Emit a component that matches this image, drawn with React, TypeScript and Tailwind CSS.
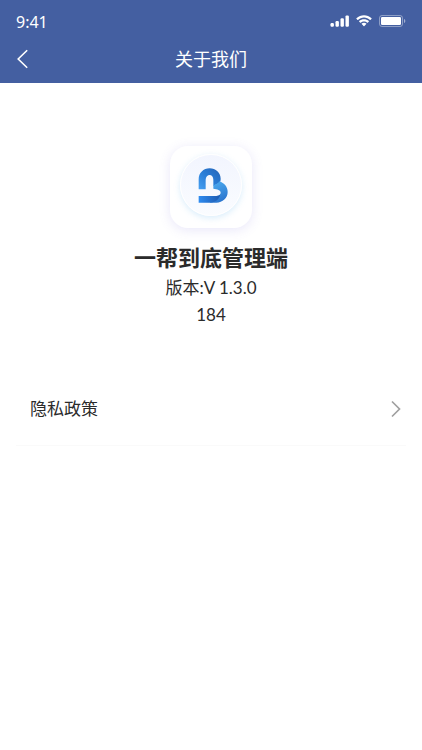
import React from 'react';

const StatusBar: React.FC = () => {
    return (
        <div className="flex h-9 items-end justify-between px-4">
            <span className="font-['Noto_Sans'] text-base leading-7">9:41</span>
            <div className="flex h-[30px] items-center gap-2">
                <svg className="h-3 w-5" viewBox="0 0 20 12" fill="currentColor" aria-hidden="true">
                    <rect x="0.5" y="8" width="3.4" height="3.8" rx="1.2" />
                    <rect x="5.5" y="6" width="3.4" height="5.8" rx="1.2" />
                    <rect x="10.5" y="3.2" width="3.4" height="8.6" rx="1.2" />
                    <rect x="15.5" y="0.4" width="3.4" height="11.4" rx="1.2" />
                </svg>
                <svg className="-mx-0.5 h-3 w-4" viewBox="0 0 16 12" fill="currentColor" aria-hidden="true">
                    <path d="M8 2.5c2.3 0 4.4.9 6 2.4.1.1.3.1.4 0l1.2-1.2c.1-.1.1-.3 0-.4C11.3-.8 4.7-.8.4 3.3c-.1.1-.1.3 0 .4l1.2 1.2c.1.1.3.1.4 0C3.6 3.4 5.7 2.5 8 2.5Z" />
                    <path d="M8 6.4c1.2 0 2.4.45 3.3 1.25.1.1.3.1.4 0l1.2-1.2c.1-.1.1-.3 0-.4-2.8-2.5-7-2.5-9.8 0-.1.1-.1.3 0 .4l1.2 1.2c.1.1.3.1.4 0C5.6 6.85 6.8 6.4 8 6.4Z" />
                    <path d="M10.3 9c.1-.1.1-.3 0-.4-1.4-1.1-3.2-1.1-4.6 0-.1.1-.1.3 0 .4l2.1 2.2c.1.1.3.1.4 0L10.3 9Z" />
                </svg>
                <svg className="h-3 w-7" viewBox="0 0 28 12" aria-hidden="true">
                    <rect x="1.5" y="0.5" width="23" height="11" rx="2.5" fill="none" stroke="currentColor" strokeOpacity="0.4" />
                    <rect x="3" y="2" width="20" height="8" rx="1.2" fill="currentColor" />
                    <path d="M26 4v4c.8-.3 1.3-1.1 1.3-2S26.8 4.3 26 4Z" fill="currentColor" fillOpacity="0.5" />
                </svg>
            </div>
        </div>
    );
};

const Header: React.FC = () => {
    return (
        <header className="bg-[#445fa1] pb-1 text-white">
            <StatusBar />
            <div className="grid h-[43px] grid-cols-[48px_1fr_48px] items-center">
                <button type="button" aria-label="返回" className="flex h-full items-center pt-0.5 pl-4">
                    <svg className="h-5 w-3" viewBox="0 0 12 20" fill="none" stroke="currentColor" strokeWidth="1.6" aria-hidden="true">
                        <path d="M11.2 1.2 2.2 10l9 8.8" />
                    </svg>
                </button>
                <h1 className="pt-0.5 text-center text-lg font-normal">关于我们</h1>
            </div>
        </header>
    );
};

const Logo: React.FC = () => {
    return (
        <div className="flex size-[82px] items-start justify-center rounded-[18px] bg-white pt-2 shadow-[0_2px_12px_rgba(110,100,220,0.16)]">
            <div className="flex size-[62px] items-center justify-end rounded-full border border-white bg-linear-to-b from-[#f2f5fe] to-[#fafcff] pr-[13px] shadow-[0_2px_6px_rgba(120,190,240,0.28)]">
                <svg className="h-[35px] w-[30px]" viewBox="41 34 90 105" aria-hidden="true">
                    <defs>
                        <linearGradient id="arch" x1="0" y1="1" x2="1" y2="0">
                            <stop offset="0" stopColor="#46a0f2" />
                            <stop offset="0.5" stopColor="#2a7dd6" />
                            <stop offset="1" stopColor="#2463b6" />
                        </linearGradient>
                        <linearGradient id="bowl" x1="0" y1="0" x2="0.4" y2="1">
                            <stop offset="0" stopColor="#4fb0f2" />
                            <stop offset="1" stopColor="#2d78d0" />
                        </linearGradient>
                        <linearGradient id="base" x1="0" y1="0" x2="1" y2="0">
                            <stop offset="0" stopColor="#2f8cf0" />
                            <stop offset="1" stopColor="#1d5ab0" />
                        </linearGradient>
                    </defs>
                    <path d="M43 98V68C43 49 57 35 76 35c18 0 33 13 33 31 0 5-1 8-3 12L87 88V69c0-9-5-14-11-14s-12 5-12 14v29Z" fill="url(#arch)" />
                    <path d="M87 86c5-2 14-4 18-12 15 5 25 17 25 32 0 18-15 32-34 32H76l20-20c8-1 13-5 13-10 0-8-10-10-22-12Z" fill="url(#bowl)" />
                    <path d="M43 118h53c6 0 10-2 12-5-3 14-14 25-32 25H43Z" fill="url(#base)" />
                </svg>
            </div>
        </div>
    );
};

export default function App() {
    return (
        <div className="min-h-screen bg-white font-['Lato','Noto_Sans_CJK_SC',sans-serif] text-[#2b2b2b]">
            <Header />
            <main className="px-4">
                <section className="flex flex-col items-center pt-[63px]">
                    <Logo />
                    <h2 className="mt-3.5 text-[22px] font-bold leading-8">一帮到底管理端</h2>
                    <p className="text-[17px] leading-[27px]">版本:V 1.3.0</p>
                    <p className="text-[17px] leading-[27px]">184</p>
                </section>
                <a href="#privacy" className="mt-11 flex h-[74px] items-center justify-between border-b border-[#fafafa] pr-0.5 pl-3.5">
                    <span className="text-[17px]">隐私政策</span>
                    <svg className="h-5 w-4" viewBox="0 0 16 20" fill="none" stroke="#a0a0a0" strokeWidth="1.7" aria-hidden="true">
                        <path d="M4 2.5 11.5 10 4 17.5" />
                    </svg>
                </a>
            </main>
        </div>
    );
}
